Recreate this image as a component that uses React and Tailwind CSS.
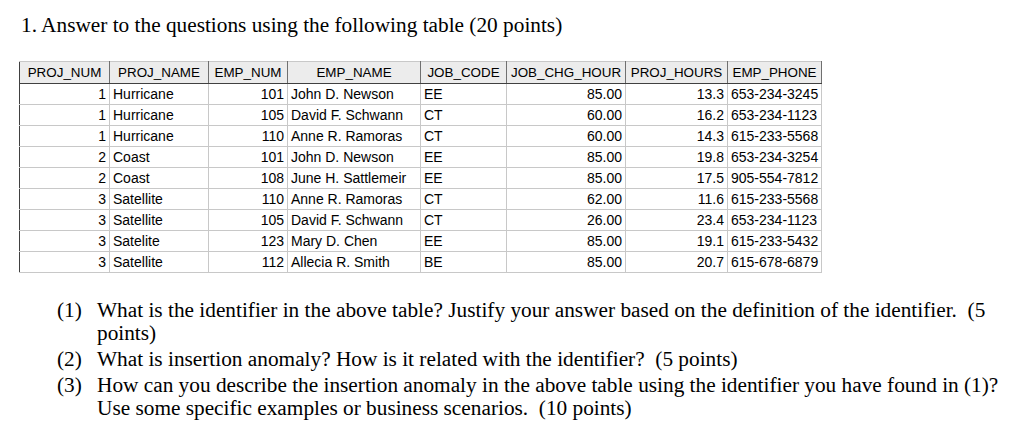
const columns = [
  { name: 'PROJ_NUM', w: 'w-[90px]', align: 'right' },
  { name: 'PROJ_NAME', w: 'w-[99px]', align: 'left' },
  { name: 'EMP_NUM', w: 'w-[79px]', align: 'right' },
  { name: 'EMP_NAME', w: 'w-[133px]', align: 'left' },
  { name: 'JOB_CODE', w: 'w-[86px]', align: 'left' },
  { name: 'JOB_CHG_HOUR', w: 'w-[119px]', align: 'right' },
  { name: 'PROJ_HOURS', w: 'w-[102px]', align: 'right' },
  { name: 'EMP_PHONE', w: 'w-[94px]', align: 'left' },
];

const rows = [
  ['1', 'Hurricane', '101', 'John D. Newson', 'EE', '85.00', '13.3', '653-234-3245'],
  ['1', 'Hurricane', '105', 'David F. Schwann', 'CT', '60.00', '16.2', '653-234-1123'],
  ['1', 'Hurricane', '110', 'Anne R. Ramoras', 'CT', '60.00', '14.3', '615-233-5568'],
  ['2', 'Coast', '101', 'John D. Newson', 'EE', '85.00', '19.8', '653-234-3254'],
  ['2', 'Coast', '108', 'June H. Sattlemeir', 'EE', '85.00', '17.5', '905-554-7812'],
  ['3', 'Satellite', '110', 'Anne R. Ramoras', 'CT', '62.00', '11.6', '615-233-5568'],
  ['3', 'Satellite', '105', 'David F. Schwann', 'CT', '26.00', '23.4', '653-234-1123'],
  ['3', 'Satelite', '123', 'Mary D. Chen', 'EE', '85.00', '19.1', '615-233-5432'],
  ['3', 'Satellite', '112', 'Allecia R. Smith', 'BE', '85.00', '20.7', '615-678-6879'],
];

const questions = [
  ['(1)', 'What is the identifier in the above table? Justify your answer based on the definition of the identifier.\u00a0 (5 points)'],
  ['(2)', 'What is insertion anomaly? How is it related with the identifier?\u00a0 (5 points)'],
  ['(3)', 'How can you describe the insertion anomaly in the above table using the identifier you have found in (1)? Use some specific examples or business scenarios.\u00a0 (10 points)'],
];

export default function App() {
  return (
    <div className="w-[1024px] h-[431px] bg-white text-black overflow-hidden">
      <p className="pl-[21px] pt-[12px] font-['Liberation_Serif',serif] text-[21.3px] leading-[26px]">
        1. Answer to the questions using the following table (20 points)
      </p>

      {/* tableau */}
      <table className="ml-[19px] mt-[23px] border-collapse table-fixed font-['Liberation_Sans',sans-serif] text-[14px] border-l border-l-[#404040] border-t border-t-[#c8c8c8]">
        <colgroup>
          {columns.map((c) => (
            <col key={c.name} className={c.w} />
          ))}
        </colgroup>
        <thead>
          <tr className="h-[22px] bg-[#ececec]">
            {columns.map((c) => (
              <th
                key={c.name}
                className="font-normal text-center text-[13.4px] p-0 leading-[21px] border-r border-r-[#707070] border-b border-b-[#404040] whitespace-nowrap"
              >
                {c.name}
              </th>
            ))}
          </tr>
        </thead>
        <tbody>
          {rows.map((r, i) => (
            <tr key={i} className="h-[21px]">
              {r.map((v, j) => (
                <td
                  key={j}
                  className={
                    'p-0 leading-[20px] border-r border-b border-[#c8c8c8] whitespace-nowrap ' +
                    (columns[j].align === 'right' ? 'text-right pr-[3px]' : 'text-left pl-[3px]')
                  }
                >
                  {v}
                </td>
              ))}
            </tr>
          ))}
        </tbody>
      </table>

      <ol className="mt-[26px] pl-[57px] pr-[24px] font-['Liberation_Serif',serif] text-[21.3px] leading-[23px]">
        {questions.map(([n, q]) => (
          <li key={n} className="flex mb-[3px]">
            <span className="w-[40px] shrink-0">{n}</span>
            <span className="flex-1">{q}</span>
          </li>
        ))}
      </ol>
    </div>
  );
}
